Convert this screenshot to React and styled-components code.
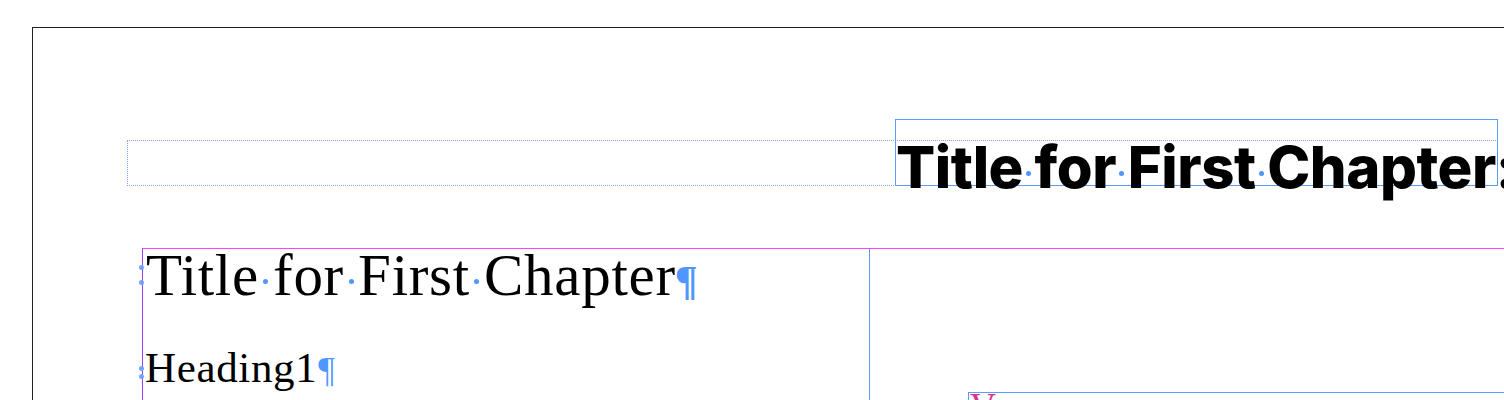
import React from 'react'
import styled, { createGlobalStyle } from 'styled-components'

const Global = createGlobalStyle`
  html, body {
    margin: 0;
    padding: 0;
    background: #ffffff;
    overflow: hidden;
  }
`

// a visible space, the way layout apps mark it with a blue dot
function Words({ text, lift }) {
  const parts = text.split(' ')
  return parts.map((w, i) => (
    <React.Fragment key={i}>
      {w}
      {i < parts.length - 1 && <Space $lift={lift} />}
    </React.Fragment>
  ))
}

function App() {
  return (
    <Canvas>
      <Global />
      <Page>
        <GuideBox>
          <TitleFrame>
            <GroteskTitle>
              <Words text="Title for First Chapter:" lift={16} />
            </GroteskTitle>
          </TitleFrame>
        </GuideBox>

        <TextFrame>
          <Column>
            <Anchor $top={16} />
            <Anchor $top={31} />
            <Anchor $top={117} />
            <Anchor $top={125} />
            <SerifTitle>
              <Words text="Title for First Chapter" lift={15} />
              <Pilcrow $bold>¶</Pilcrow>
            </SerifTitle>
            <Heading>
              Heading1<Pilcrow>¶</Pilcrow>
            </Heading>
          </Column>
          <Column $last>
            <LowerFrame>
              <LowerText>V</LowerText>
            </LowerFrame>
          </Column>
        </TextFrame>
      </Page>
    </Canvas>
  )
}

export default App

const Canvas = styled.div`
  width: 1504px;
  height: 400px;
  overflow: hidden;
  box-sizing: border-box;
  padding: 27px 0 0 32px;
  background: #ffffff;
`

const Page = styled.div`
  width: 1800px;
  height: 600px;
  box-sizing: border-box;
  border-top: 1px solid #222;
  border-left: 1px solid #222;
  padding: 112px 0 0 94px;
`

const GuideBox = styled.div`
  width: 1369px;
  height: 44px;
  border: 1px dotted #7fa3e6;
  display: flex;
  justify-content: flex-end;
  align-items: flex-end;
`

const TitleFrame = styled.div`
  flex: none;
  width: 601px;
  height: 65px;
  margin: 0 -1px -1px 0;
  border: 1px solid #5a9bff;
  white-space: nowrap;
`

const GroteskTitle = styled.div`
  font-family: Inter, "Liberation Sans", sans-serif;
  font-weight: 800;
  font-size: 58px;
  letter-spacing: -0.008em;
  line-height: 1;
  color: #000;
  margin: 18px 0 0 0;
`

const Space = styled.span`
  position: relative;
  display: inline-block;
  width: 0.2em;
  height: 1px;

  &::after {
    content: '';
    position: absolute;
    left: 50%;
    top: -${p => p.$lift}px;
    width: 5px;
    height: 5px;
    margin-left: -2.5px;
    border-radius: 50%;
    background: #4f96ff;
  }
`

const TextFrame = styled.div`
  margin: 62px 0 0 15px;
  display: grid;
  grid-template-columns: 727px 1fr;
  height: 300px;
  border-top: 1px solid #ff44ff;
  border-left: 1px solid #a040ff;
  white-space: nowrap;
`

const Column = styled.div`
  position: relative;
  border-right: ${p => (p.$last ? 'none' : '1px solid #5a9bff')};
`

const Anchor = styled.span`
  position: absolute;
  left: -4px;
  top: ${p => p.$top}px;
  width: 5px;
  height: 5px;
  border-radius: 50%;
  background: #6fa6ff;
`

const SerifTitle = styled.div`
  font-family: "Liberation Serif", serif;
  font-size: 59px;
  letter-spacing: 0.012em;
  line-height: 1;
  color: #000;
  margin: -3px 0 0 3px;

  ${Space} {
    width: 0.24em;
  }
`

const Heading = styled.div`
  font-family: "Liberation Serif", serif;
  font-size: 43px;
  letter-spacing: 0.015em;
  line-height: 1;
  color: #000;
  margin: 41px 0 0 2px;
`

const Pilcrow = styled.span`
  color: #4f96ff;
  font-weight: ${p => (p.$bold ? 700 : 400)};
  font-size: ${p => (p.$bold ? '0.72em' : '0.85em')};
  margin-left: ${p => (p.$bold ? '-1px' : '1px')};
`

const LowerFrame = styled.div`
  margin: 143px 0 0 98px;
  height: 80px;
  border-top: 1px solid #5a9bff;
  border-left: 1px solid #5a9bff;
  overflow: hidden;
`

const LowerText = styled.div`
  font-family: "Liberation Serif", serif;
  font-size: 36px;
  line-height: 1;
  color: #d6338f;
  margin: -5px 0 0 1px;
`
